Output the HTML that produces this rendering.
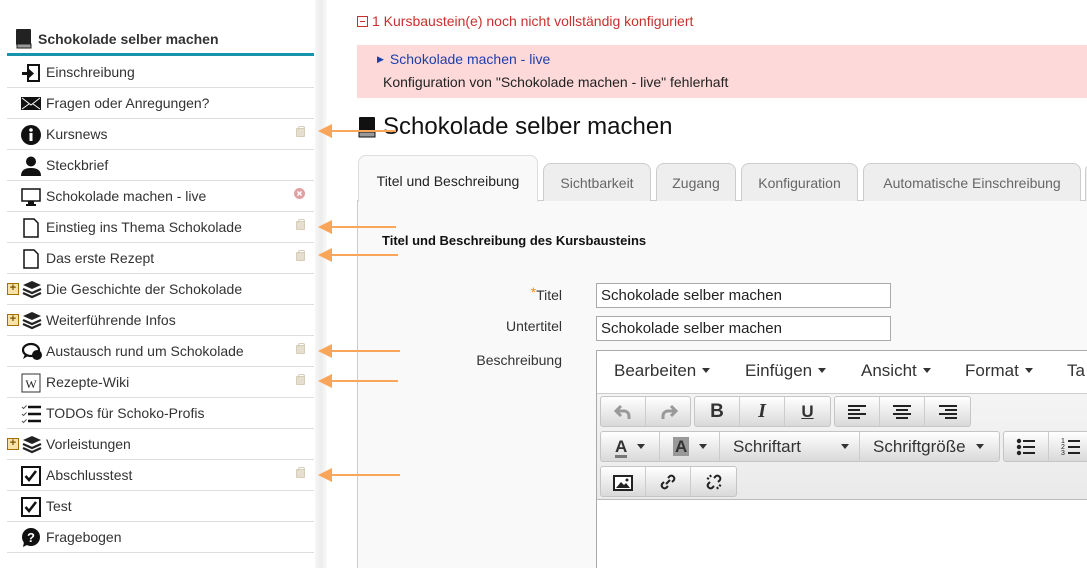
<!DOCTYPE html>
<html style="overflow:hidden"><head><meta charset="utf-8"><style>
*{box-sizing:border-box;margin:0;padding:0}
body{width:1087px;height:568px;overflow:hidden;background:#fff;font-family:"Liberation Sans",Arial,sans-serif;color:#333;position:relative}
.a{position:absolute}
.row{position:absolute;left:7px;width:307px;height:31px;border-bottom:1px solid #ddd;font-size:14px;color:#333}
.row span.t{position:absolute;left:39px;top:7px;white-space:nowrap}
.row svg.i{position:absolute;left:14px;top:6px}
.lock{position:absolute;left:289px;top:9px;width:9px;height:9px;background:#e6dfd0;border:1px solid #d6cdb9;border-radius:1px}
.lock:before{content:"";position:absolute;left:1px;top:-3px;width:5px;height:3px;border:1px solid #d6cdb9;border-bottom:0;border-radius:2px 2px 0 0}
.plus{position:absolute;left:0;top:9px;width:12px;height:12px;border:1px solid #a07000;background:#f7e3a8;font-size:11px;line-height:9px;text-align:center;color:#7a5200;font-weight:bold}
.arrow{position:absolute;height:2px;background:#f9a55a}
.arrow:before{content:"";position:absolute;left:-10px;top:-6px;border-right:14px solid #f9a55a;border-top:7px solid transparent;border-bottom:7px solid transparent}
.tab{position:absolute;top:163px;height:38px;background:#eee;border:1px solid #ccc;border-bottom:0;border-radius:8px 8px 0 0;font-size:14px;color:#666;text-align:center;padding-top:11px;white-space:nowrap}
.lbl{position:absolute;right:525px;font-size:14px;color:#333}
.inp{position:absolute;left:596px;width:295px;height:25px;border:1px solid #aaa;background:#fff;font-size:15px;padding:3px 4px;color:#222}
.m{position:absolute;top:361px;font-size:17px;color:#333}
.car{display:inline-block;margin-left:6px;border-top:5px solid #333;border-left:4px solid transparent;border-right:4px solid transparent;vertical-align:3px}
.grp{position:absolute;height:31px;border:1px solid #c5c5c5;border-radius:3px;background:linear-gradient(#fff,#d9d9d9)}
.btn{position:absolute;top:0;height:29px;border-right:1px solid #ccc;text-align:center;font-size:17px;line-height:29px;color:#333}
.btn svg{vertical-align:-4px}
</style></head><body>
<svg class="a" style="left:15px;top:29px" width="18" height="20"><rect x="1" y="0" width="15" height="16" rx="1" fill="#222"/><rect x="2" y="15" width="14" height="4" fill="#999" stroke="#222"/></svg>
<div class="a" style="left:38px;top:31px;font-size:14px;font-weight:bold;color:#333">Schokolade selber machen</div>
<div class="a" style="left:7px;top:53px;width:307px;height:3px;background:#1793ab"></div>
<div class="a" style="left:315px;top:0;width:12px;height:568px;background:linear-gradient(90deg,#f7f7f7,#ececec,#fafafa)"></div>

<div class="row" style="top:57px"><svg class="i" width="20" height="20"><rect x="7" y="2" width="11" height="16" fill="none" stroke="#111" stroke-width="2"/><rect x="1" y="9" width="9" height="3" fill="#111"/><path d="M7 5l6 5.5-6 5.5z" fill="#111"/></svg><span class="t">Einschreibung</span></div>
<div class="row" style="top:88px"><svg class="i" width="20" height="18" style="top:7px"><rect x="0" y="2" width="20" height="13" fill="#111"/><path d="M1 3l9 7 9-7M1 14l7-5M19 14l-7-5" stroke="#fff" fill="none"/></svg><span class="t">Fragen oder Anregungen?</span></div>
<div class="row" style="top:119px"><svg class="i" width="20" height="20"><circle cx="10" cy="10" r="10" fill="#111"/><rect x="8.5" y="8" width="3" height="8" fill="#fff"/><circle cx="10" cy="5" r="1.8" fill="#fff"/></svg><span class="t">Kursnews</span><div class="lock"></div></div>
<div class="row" style="top:150px"><svg class="i" width="20" height="20"><circle cx="10" cy="5.5" r="5" fill="#111"/><path d="M0 20c0-6 4-8 10-8s10 2 10 8z" fill="#111"/></svg><span class="t">Steckbrief</span></div>
<div class="row" style="top:181px"><svg class="i" width="20" height="20"><rect x="1" y="2" width="18" height="12" fill="none" stroke="#111" stroke-width="1.5"/><rect x="7" y="14" width="6" height="3" fill="#111"/><rect x="5" y="17" width="10" height="2" fill="#111"/></svg><span class="t">Schokolade machen - live</span><svg style="position:absolute;left:287px;top:7px" width="11" height="11"><circle cx="5.5" cy="5.5" r="5.5" fill="#e0a0a4"/><path d="M3.5 3.5l4 4M7.5 3.5l-4 4" stroke="#fff" stroke-width="1.5"/></svg></div>
<div class="row" style="top:212px"><svg class="i" width="20" height="20"><path d="M3 1h10l4 4v14H3z" fill="#fff" stroke="#111" stroke-width="1.5"/></svg><span class="t">Einstieg ins Thema Schokolade</span><div class="lock"></div></div>
<div class="row" style="top:243px"><svg class="i" width="20" height="20"><path d="M3 1h10l4 4v14H3z" fill="#fff" stroke="#111" stroke-width="1.5"/></svg><span class="t">Das erste Rezept</span><div class="lock"></div></div>
<div class="row" style="top:274px"><div class="plus">+</div><svg class="i" width="20" height="20" style="left:15px"><path d="M10 1l9 4-9 4-9-4z" fill="#222"/><path d="M1 9l9 4 9-4M1 13l9 4 9-4" stroke="#222" stroke-width="2.2" fill="none"/></svg><span class="t">Die Geschichte der Schokolade</span></div>
<div class="row" style="top:305px"><div class="plus">+</div><svg class="i" width="20" height="20" style="left:15px"><path d="M10 1l9 4-9 4-9-4z" fill="#222"/><path d="M1 9l9 4 9-4M1 13l9 4 9-4" stroke="#222" stroke-width="2.2" fill="none"/></svg><span class="t">Weiterführende Infos</span></div>
<div class="row" style="top:336px"><svg class="i" width="22" height="20" style="left:15px"><ellipse cx="9" cy="8" rx="8" ry="6" fill="none" stroke="#111" stroke-width="2.2"/><path d="M3 12l-2 5 5-3" fill="#111"/><circle cx="15" cy="13" r="5" fill="#111"/></svg><span class="t">Austausch rund um Schokolade</span><div class="lock"></div></div>
<div class="row" style="top:367px"><svg class="i" width="20" height="20"><rect x="1" y="1" width="18" height="18" fill="#fff" stroke="#333"/><text x="10" y="15" font-size="12" font-family="Liberation Serif" text-anchor="middle" fill="#222">W</text></svg><span class="t">Rezepte-Wiki</span><div class="lock"></div></div>
<div class="row" style="top:398px"><svg class="i" width="20" height="20"><path d="M7 3h13M7 10h13M7 17h13" stroke="#111" stroke-width="2.5"/><path d="M1 3l1.5 1.5 3-3M1 10l1.5 1.5 3-3M1 17l1.5 1.5 3-3" stroke="#555" fill="none"/></svg><span class="t">TODOs für Schoko-Profis</span></div>
<div class="row" style="top:429px"><div class="plus">+</div><svg class="i" width="20" height="20" style="left:15px"><path d="M10 1l9 4-9 4-9-4z" fill="#222"/><path d="M1 9l9 4 9-4M1 13l9 4 9-4" stroke="#222" stroke-width="2.2" fill="none"/></svg><span class="t">Vorleistungen</span></div>
<div class="row" style="top:460px"><svg class="i" width="20" height="20"><rect x="1" y="1" width="18" height="18" fill="#fff" stroke="#111" stroke-width="2"/><path d="M4.5 10l3.5 4 7-9" stroke="#111" stroke-width="2.5" fill="none"/></svg><span class="t">Abschlusstest</span><div class="lock"></div></div>
<div class="row" style="top:491px"><svg class="i" width="20" height="20"><rect x="1" y="1" width="18" height="18" fill="#fff" stroke="#111" stroke-width="2"/><path d="M4.5 10l3.5 4 7-9" stroke="#111" stroke-width="2.5" fill="none"/></svg><span class="t">Test</span></div>
<div class="row" style="top:522px"><svg class="i" width="20" height="20"><circle cx="10" cy="9" r="9" fill="#111"/><path d="M3 14l-1 5 6-3z" fill="#111"/><text x="10" y="14" font-size="13" font-weight="bold" text-anchor="middle" fill="#fff" font-family="Liberation Sans">?</text></svg><span class="t">Fragebogen</span></div>

<div class="a" style="left:357px;top:13px;font-size:14px;color:#c9302c;white-space:nowrap"><span style="display:inline-block;width:11px;height:11px;border:1px solid #c9302c;vertical-align:-1px;position:relative;margin-right:4px"><span style="position:absolute;left:2px;top:4px;width:5px;height:1px;background:#c9302c"></span></span>1 Kursbaustein(e) noch nicht vollständig konfiguriert</div>
<div class="a" style="left:357px;top:45px;width:730px;height:53px;background:#fdd9d9"></div>
<div class="a" style="left:377px;top:51px;font-size:14px;color:#1e3fa8;white-space:nowrap"><span style="font-size:9px;vertical-align:2px;margin-right:6px">▶</span>Schokolade machen - live</div>
<div class="a" style="left:383px;top:74px;font-size:14px;color:#222;white-space:nowrap">Konfiguration von "Schokolade machen - live" fehlerhaft</div>
<svg class="a" style="left:358px;top:117px" width="22" height="22"><rect x="1" y="0" width="16" height="16" rx="1" fill="#111"/><rect x="1" y="15" width="16" height="5" fill="#999" stroke="#111"/></svg>
<div class="a" style="left:383px;top:113px;font-size:24px;color:#111;white-space:nowrap">Schokolade selber machen</div>

<div class="a" style="left:357px;top:200px;width:730px;height:368px;background:#f9f9f9;border-left:1px solid #ccc;border-top:1px solid #ccc"></div>
<div class="tab" style="left:358px;top:155px;width:180px;height:47px;background:#f9f9f9;color:#222;padding-top:17px;border-color:#ddd">Titel und Beschreibung</div>
<div class="tab" style="left:543px;width:108px">Sichtbarkeit</div>
<div class="tab" style="left:656px;width:80px">Zugang</div>
<div class="tab" style="left:741px;width:117px">Konfiguration</div>
<div class="tab" style="left:863px;width:218px">Automatische Einschreibung</div>
<div class="tab" style="left:1085px;width:20px"></div>

<div class="a" style="left:382px;top:233px;font-size:13px;font-weight:bold;color:#111">Titel und Beschreibung des Kursbausteins</div>
<div class="lbl" style="top:284px"><span style="color:#f08c1e;font-size:14px;vertical-align:3px">*</span>Titel</div>
<div class="lbl" style="top:318px">Untertitel</div>
<div class="lbl" style="top:352px">Beschreibung</div>
<div class="inp" style="top:283px">Schokolade selber machen</div>
<div class="inp" style="top:316px">Schokolade selber machen</div>

<div class="a" style="left:596px;top:350px;width:491px;height:218px;border:1px solid #aaa;border-right:0;border-bottom:0;background:#fff"></div>
<div class="a" style="left:597px;top:351px;width:490px;height:43px;background:#fff;border-bottom:1px solid #ccc"></div>
<div class="a" style="left:597px;top:394px;width:490px;height:106px;background:linear-gradient(#f4f4f4,#eaeaea);border-bottom:1px solid #bbb"></div>
<div class="m" style="left:614px">Bearbeiten<span class="car"></span></div>
<div class="m" style="left:745px">Einfügen<span class="car"></span></div>
<div class="m" style="left:861px">Ansicht<span class="car"></span></div>
<div class="m" style="left:965px">Format<span class="car"></span></div>
<div class="m" style="left:1067px">Ta</div>

<div class="grp" style="left:600px;top:396px;width:91px"><div class="btn" style="left:0;width:45px"><svg width="20" height="18"><path d="M8 3L3 8l5 5M3 8h8a5 5 0 0 1 5 5v3" stroke="#999" stroke-width="3" fill="none"/></svg></div><div class="btn" style="left:45px;width:45px;border:0"><svg width="20" height="18"><path d="M12 3l5 5-5 5M17 8H9a5 5 0 0 0-5 5v3" stroke="#999" stroke-width="3" fill="none"/></svg></div></div>
<div class="grp" style="left:694px;top:396px;width:137px"><div class="btn" style="left:0;width:45px;font-weight:bold;font-size:19px">B</div><div class="btn" style="left:45px;width:45px;font-style:italic;font-weight:bold;font-family:'Liberation Serif';font-size:20px">I</div><div class="btn" style="left:90px;width:45px;border:0;font-weight:bold;text-decoration:underline">U</div></div>
<div class="grp" style="left:834px;top:396px;width:137px"><div class="btn" style="left:0;width:45px"><svg width="20" height="18"><path d="M1 3h18M1 7h12M1 11h18M1 15h12" stroke="#222" stroke-width="2"/></svg></div><div class="btn" style="left:45px;width:45px"><svg width="20" height="18"><path d="M1 3h18M4 7h12M1 11h18M4 15h12" stroke="#222" stroke-width="2"/></svg></div><div class="btn" style="left:90px;width:45px;border:0"><svg width="20" height="18"><path d="M1 3h18M7 7h12M1 11h18M7 15h12" stroke="#222" stroke-width="2"/></svg></div></div>

<div class="grp" style="left:600px;top:431px;width:400px"><div class="btn" style="left:0;width:59px;font-weight:bold;text-align:left;padding-left:14px"><span style="border-bottom:3px solid #777;line-height:17px;display:inline-block">A</span><span class="car" style="margin-left:10px"></span></div><div class="btn" style="left:59px;width:60px;font-weight:bold;text-align:left;padding-left:13px"><span style="background:#999;padding:0 2px;line-height:19px;display:inline-block">A</span><span class="car" style="margin-left:10px"></span></div><div class="btn" style="left:119px;width:140px;text-align:left;padding-left:13px">Schriftart<span class="car" style="margin-left:40px"></span></div><div class="btn" style="left:259px;width:140px;text-align:left;padding-left:13px;border:0">Schriftgröße<span class="car" style="margin-left:10px"></span></div></div>
<div class="grp" style="left:1003px;top:431px;width:100px"><div class="btn" style="left:0;width:45px"><svg width="20" height="18"><circle cx="3" cy="3" r="2.2" fill="#222"/><circle cx="3" cy="9" r="2.2" fill="#222"/><circle cx="3" cy="15" r="2.2" fill="#222"/><path d="M7 3h12M7 9h12M7 15h12" stroke="#222" stroke-width="2"/></svg></div><div class="btn" style="left:45px;width:45px"><svg width="20" height="18"><text x="0" y="17" font-size="7" font-family="Liberation Sans" fill="#222">3</text><text x="0" y="11" font-size="7" font-family="Liberation Sans" fill="#222">2</text><text x="0" y="5" font-size="7" font-family="Liberation Sans" fill="#222">1</text><path d="M7 3h12M7 9h12M7 15h12" stroke="#222" stroke-width="2"/></svg></div></div>
<div class="grp" style="left:600px;top:466px;width:137px"><div class="btn" style="left:0;width:45px"><svg width="20" height="16"><rect x="1" y="1" width="18" height="14" fill="#fff" stroke="#222" stroke-width="2"/><path d="M3 13l5-6 3 3 2-2 4 5z" fill="#222"/><circle cx="14" cy="5" r="1.5" fill="#222"/></svg></div><div class="btn" style="left:45px;width:45px"><svg width="20" height="20" style="vertical-align:-5px"><path d="M8 12l4-4M6 10l-2 2a3 3 0 0 0 4 4l2-2M14 10l2-2a3 3 0 0 0-4-4l-2 2" stroke="#222" stroke-width="2" fill="none"/></svg></div><div class="btn" style="left:90px;width:45px;border:0"><svg width="20" height="20" style="vertical-align:-5px"><path d="M6 10l-2 2a3 3 0 0 0 4 4l2-2M14 10l2-2a3 3 0 0 0-4-4l-2 2M3 6l2 1M6 3l1 2M17 14l-2-1M14 17l-1-2" stroke="#222" stroke-width="2" fill="none"/></svg></div></div>

<div class="arrow" style="left:328px;top:130px;width:68px"></div>
<div class="arrow" style="left:328px;top:226px;width:68px"></div>
<div class="arrow" style="left:328px;top:254px;width:70px"></div>
<div class="arrow" style="left:328px;top:350px;width:72px"></div>
<div class="arrow" style="left:328px;top:380px;width:70px"></div>
<div class="arrow" style="left:328px;top:474px;width:72px"></div>
</body></html>
